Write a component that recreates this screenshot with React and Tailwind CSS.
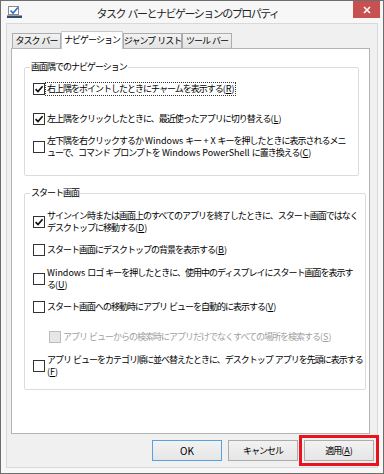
import React from "react";

const JP = "font-['Noto_Sans_CJK_JP',sans-serif]";

// CJK runs get tight tracking, ASCII runs keep normal spacing
function J({ t }) {
  const parts = t.split(/([\x20-\x7e]+)/);
  return (
    <>
      {parts.map((p, i) =>
        /^[\x20-\x7e]+$/.test(p) ? (
          <span key={i} className="tracking-[0px] whitespace-pre">{p}</span>
        ) : (
          <span key={i} className="tracking-[-1px]">{p}</span>
        )
      )}
    </>
  );
}

function Key({ k }) {
  return (
    <span className="tracking-[0px]">
      (<span className="underline underline-offset-[1px]">{k}</span>)
    </span>
  );
}

function Box({ checked, disabled }) {
  return (
    <span
      className={
        disabled
          ? "w-[12px] h-[12px] shrink-0 border border-[#bcbcbc] bg-[#e6e6e6]"
          : "w-[12px] h-[12px] shrink-0 border border-[#333333] bg-white flex items-center justify-center"
      }
    >
      {checked && (
        <svg width="10" height="10" viewBox="0 0 10 10">
          <path d="M1.6 5.2 L4 7.6 L8.6 2.2" stroke="#111" strokeWidth="1.7" fill="none" />
        </svg>
      )}
    </span>
  );
}

function Row({ mt, checked, disabled, focus, indent, lines, k }) {
  return (
    <div className={`flex items-center ${mt} ${indent ? "pl-[24px]" : "pl-[8px]"}`}>
      <Box checked={checked} disabled={disabled} />
      <div
        className={`px-px border whitespace-nowrap leading-[12px] ${
          focus ? "border-dotted border-[#333]" : "border-transparent"
        } ${disabled ? "text-[#a0a0a0]" : "text-black"}`}
      >
        {lines.map((l, i) => (
          <div key={i}>
            <J t={l} />
            {i === lines.length - 1 && <Key k={k} />}
          </div>
        ))}
      </div>
    </div>
  );
}

function Group({ title, children, mt, pb }) {
  return (
    <fieldset className={`border border-[#dcdcdc] rounded-[2px] ${mt} ${pb}`}>
      <legend className="ml-[5px] px-px leading-[12px] text-black">
        <J t={title} />
      </legend>
      {children}
    </fieldset>
  );
}

function Tab({ label, w, active }) {
  return active ? (
    <div
      className={`${w} h-[18px] -mb-px relative z-10 bg-white border border-b-0 border-[#c8c8c8] flex items-center justify-center pb-[2px] whitespace-nowrap`}
    >
      <J t={label} />
    </div>
  ) : (
    <div
      className={`${w} h-[15px] border border-b-0 border-[#acacac] bg-gradient-to-b from-[#f2f2f2] to-[#e3e3e3] flex items-center justify-center whitespace-nowrap`}
    >
      <J t={label} />
    </div>
  );
}

function Btn({ children, def, apply }) {
  return (
    <button
      className={`w-[70px] h-[21px] border flex items-center justify-center bg-gradient-to-b from-[#f2f2f2] to-[#e6e6e6] text-black ${
        def ? "border-[#5a9fe0]" : "border-[#acacac]"
      } ${apply ? "outline-[3px] outline-solid outline-[#e8131d] outline-offset-[2px]" : ""}`}
    >
      {children}
    </button>
  );
}

export default function App() {
  return (
    <div className={`w-[384px] h-[474px] border border-[#6d6d6d] bg-[#f7f7f7] flex flex-col text-[9px] ${JP}`}>
      {/* title bar */}
      <div className="h-[22px] shrink-0 flex items-start relative">
        <div className="ml-[6px] mt-[5px]">
          <svg width="15" height="12" viewBox="0 0 15 12">
            <rect x="1.5" y="0.5" width="10" height="8" fill="#fff" stroke="#8a8a8a" />
            <path d="M3.5 4.5 L6 7 L11 1.5" stroke="#1f6fd0" strokeWidth="1.6" fill="none" />
            <rect x="0" y="9.5" width="15" height="2.5" fill="#3a4a6a" />
          </svg>
        </div>
        <div className="flex-1 text-center pt-[5px] text-[11px] leading-[14px] text-[#222]">
          <span className="tracking-[-1.5px]">タスク</span>
          <span className="tracking-[0px]"> </span>
          <span className="tracking-[-1.5px]">バーとナビゲーションのプロパティ</span>
        </div>
        <div className="w-[27px] h-[17px] mr-[3px] bg-[#c75050] flex items-center justify-center">
          <svg width="8" height="8" viewBox="0 0 8 8">
            <path d="M1 1 L7 7 M7 1 L1 7" stroke="#fff" strokeWidth="1.6" />
          </svg>
        </div>
      </div>

      {/* client area */}
      <div className="mx-[5px] mb-[5px] flex-1 border border-[#d9d9d9] bg-[#f0f0f0] flex flex-col pt-[7px]">
        <div className="flex items-end ml-[5px]">
          <Tab w="w-[49px]" label="タスク バー" />
          <Tab w="w-[62px]" label="ナビゲーション" active />
          <Tab w="w-[59px]" label="ジャンプ リスト" />
          <Tab w="w-[50px]" label="ツール バー" />
        </div>
        <div className="ml-[4px] w-[359px] h-[386px] bg-white border border-[#b4b4b4] pt-[12px] pl-[12px] pr-[10px]">
          <Group title="画面隅でのナビゲーション" mt="" pb="pb-[15px]">
            <Row mt="mt-[9px]" checked focus k="R" lines={["右上隅をポイントしたときにチャームを表示する"]} />
            <Row mt="mt-[16px]" checked k="L" lines={["左上隅をクリックしたときに、最近使ったアプリに切り替える"]} />
            <Row
              mt="mt-[8px]"
              k="C"
              lines={[
                "左下隅を右クリックするか Windows キー + X キーを押したときに表示されるメニ",
                "ューで、コマンド プロンプトを Windows PowerShell に置き換える",
              ]}
            />
          </Group>
          <Group title="スタート画面" mt="mt-[11px]" pb="pb-[10px]">
            <Row
              mt="mt-[10px]"
              checked
              k="D"
              lines={[
                "サインイン時または画面上のすべてのアプリを終了したときに、スタート画面ではなく",
                "デスクトップに移動する",
              ]}
            />
            <Row mt="mt-[8px]" k="B" lines={["スタート画面にデスクトップの背景を表示する"]} />
            <Row
              mt="mt-[9px]"
              k="U"
              lines={["Windows ロゴ キーを押したときに、使用中のディスプレイにスタート画面を表示す", "る"]}
            />
            <Row mt="mt-[8px]" k="V" lines={["スタート画面への移動時にアプリ ビューを自動的に表示する"]} />
            <Row
              mt="mt-[16px]"
              indent
              disabled
              k="S"
              lines={["アプリ ビューからの検索時にアプリだけでなくすべての場所を検索する"]}
            />
            <Row
              mt="mt-[9px]"
              k="F"
              lines={["アプリ ビューをカテゴリ順に並べ替えたときに、デスクトップ アプリを先頭に表示する", ""]}
            />
          </Group>
        </div>
        <div className="mt-[6px] flex justify-end gap-[6px] pr-[3px]">
          <Btn def>
            <span className="text-[10px]">OK</span>
          </Btn>
          <Btn>
            <J t="キャンセル" />
          </Btn>
          <Btn apply>
            <J t="適用" />
            <Key k="A" />
          </Btn>
        </div>
      </div>
    </div>
  );
}
